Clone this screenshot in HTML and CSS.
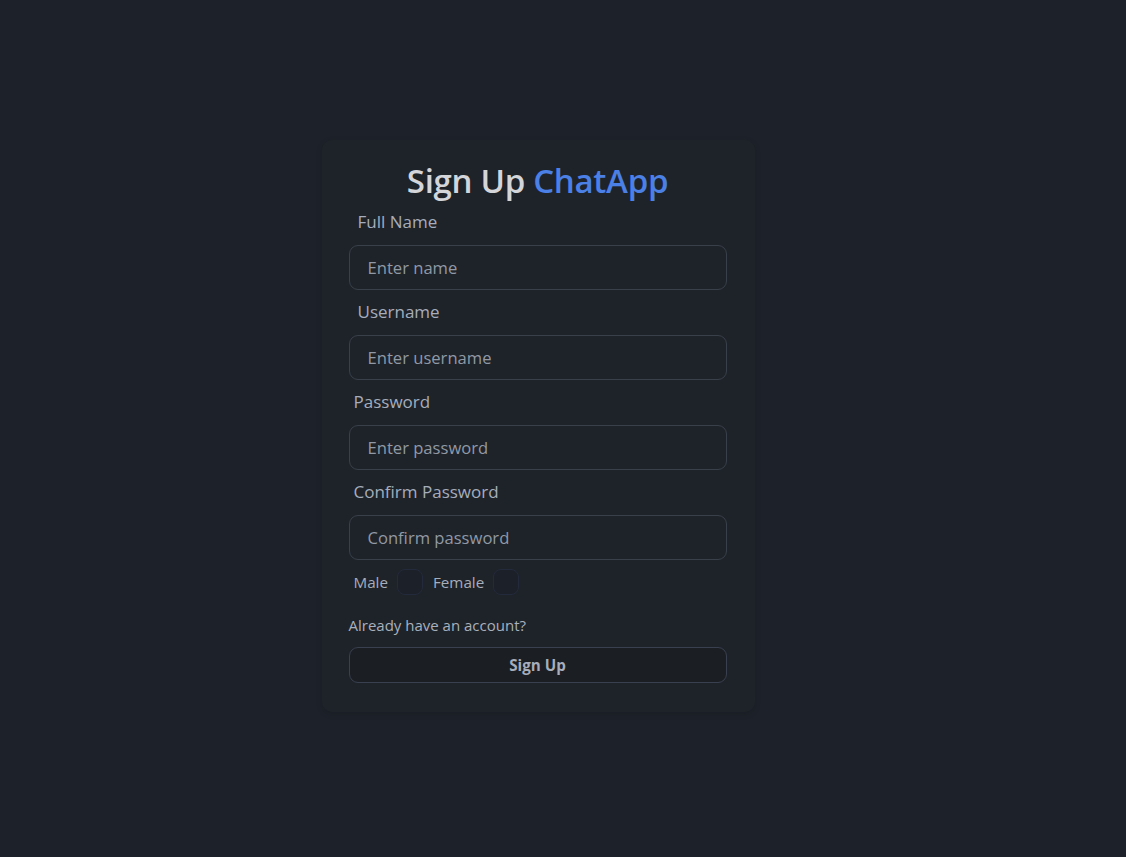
FILE: index.html
```html
<!DOCTYPE html>
<html lang="en">
<head>
<meta charset="utf-8">
<title>Sign Up ChatApp</title>
<link rel="stylesheet" href="styles.css">
</head>
<body>
<main class="page">
  <div class="card">
    <h1 class="title">Sign Up <span class="brand">ChatApp</span></h1>
    <form class="form">
      <label class="label label-wide">Full Name</label>
      <input class="input" type="text" placeholder="Enter name">
      <label class="label label-wide">Username</label>
      <input class="input" type="text" placeholder="Enter username">
      <label class="label">Password</label>
      <input class="input" type="password" placeholder="Enter password">
      <label class="label">Confirm Password</label>
      <input class="input" type="password" placeholder="Confirm password">
      <div class="gender">
        <span class="gender-text">Male</span><span class="checkbox"></span>
        <span class="gender-text">Female</span><span class="checkbox"></span>
      </div>
      <a class="link">Already have an account?</a>
      <button class="btn" type="button">Sign Up</button>
    </form>
  </div>
</main>
</body>
</html>
```
FILE: styles.css
```css
* { box-sizing: border-box; }
html, body { margin: 0; height: 100%; }
body {
  background: #1d222a;
  font-family: "Open Sans", "Noto Sans", sans-serif;
  color: #a6adbb;
}
.page {
  min-height: 100vh;
  display: flex;
  align-items: center;
  justify-content: center;
  padding-right: 50px;
  padding-bottom: 6px;
}
.card {
  width: 433px;
  padding: 23px 28px 29px 27px;
  background: #1e232a;
  border-radius: 10px;
  box-shadow: 0 2px 6px rgba(0,0,0,0.14);
}
.title {
  margin: 0;
  text-align: center;
  font-size: 33px;
  line-height: 36px;
  font-weight: 600;
  color: #d3d5d9;
  letter-spacing: -0.3px;
}
.brand { color: #4b80e6; }
.form { display: flex; flex-direction: column; margin-top: 1px; }
.label {
  display: block;
  padding: 10px 5px 11px;
  font-size: 17px;
  line-height: 24px;
  color: #a6adbb;
}
.label-wide { padding-left: 9px; }
.input {
  width: 100%;
  height: 45px;
  padding: 0 18px;
  background: #1e232a;
  border: 1px solid #3a4049;
  border-radius: 9px;
  font-family: inherit;
  font-size: 16.6px;
  color: #a6adbb;
  outline: none;
}
.input::placeholder { color: #9199a5; }
.gender {
  display: flex;
  align-items: center;
  margin-top: 9px;
  padding-left: 5px;
  font-size: 15.2px;
}
.gender-text { margin-right: 9px; }
.checkbox {
  width: 26px;
  height: 26px;
  border: 1px solid #232a3b;
  border-radius: 8px;
  background: #1c2028;
  margin-right: 10px;
}
.link {
  margin-top: 20px;
  font-size: 15px;
  line-height: 20px;
  color: #a9b0bc;
}
.btn {
  margin-top: 12px;
  height: 36px;
  width: 100%;
  background: #1b1e23;
  border: 1px solid #39404f;
  border-radius: 9px;
  color: #a6adbb;
  font-family: inherit;
  font-size: 15.2px;
  font-weight: 700;
}
```
